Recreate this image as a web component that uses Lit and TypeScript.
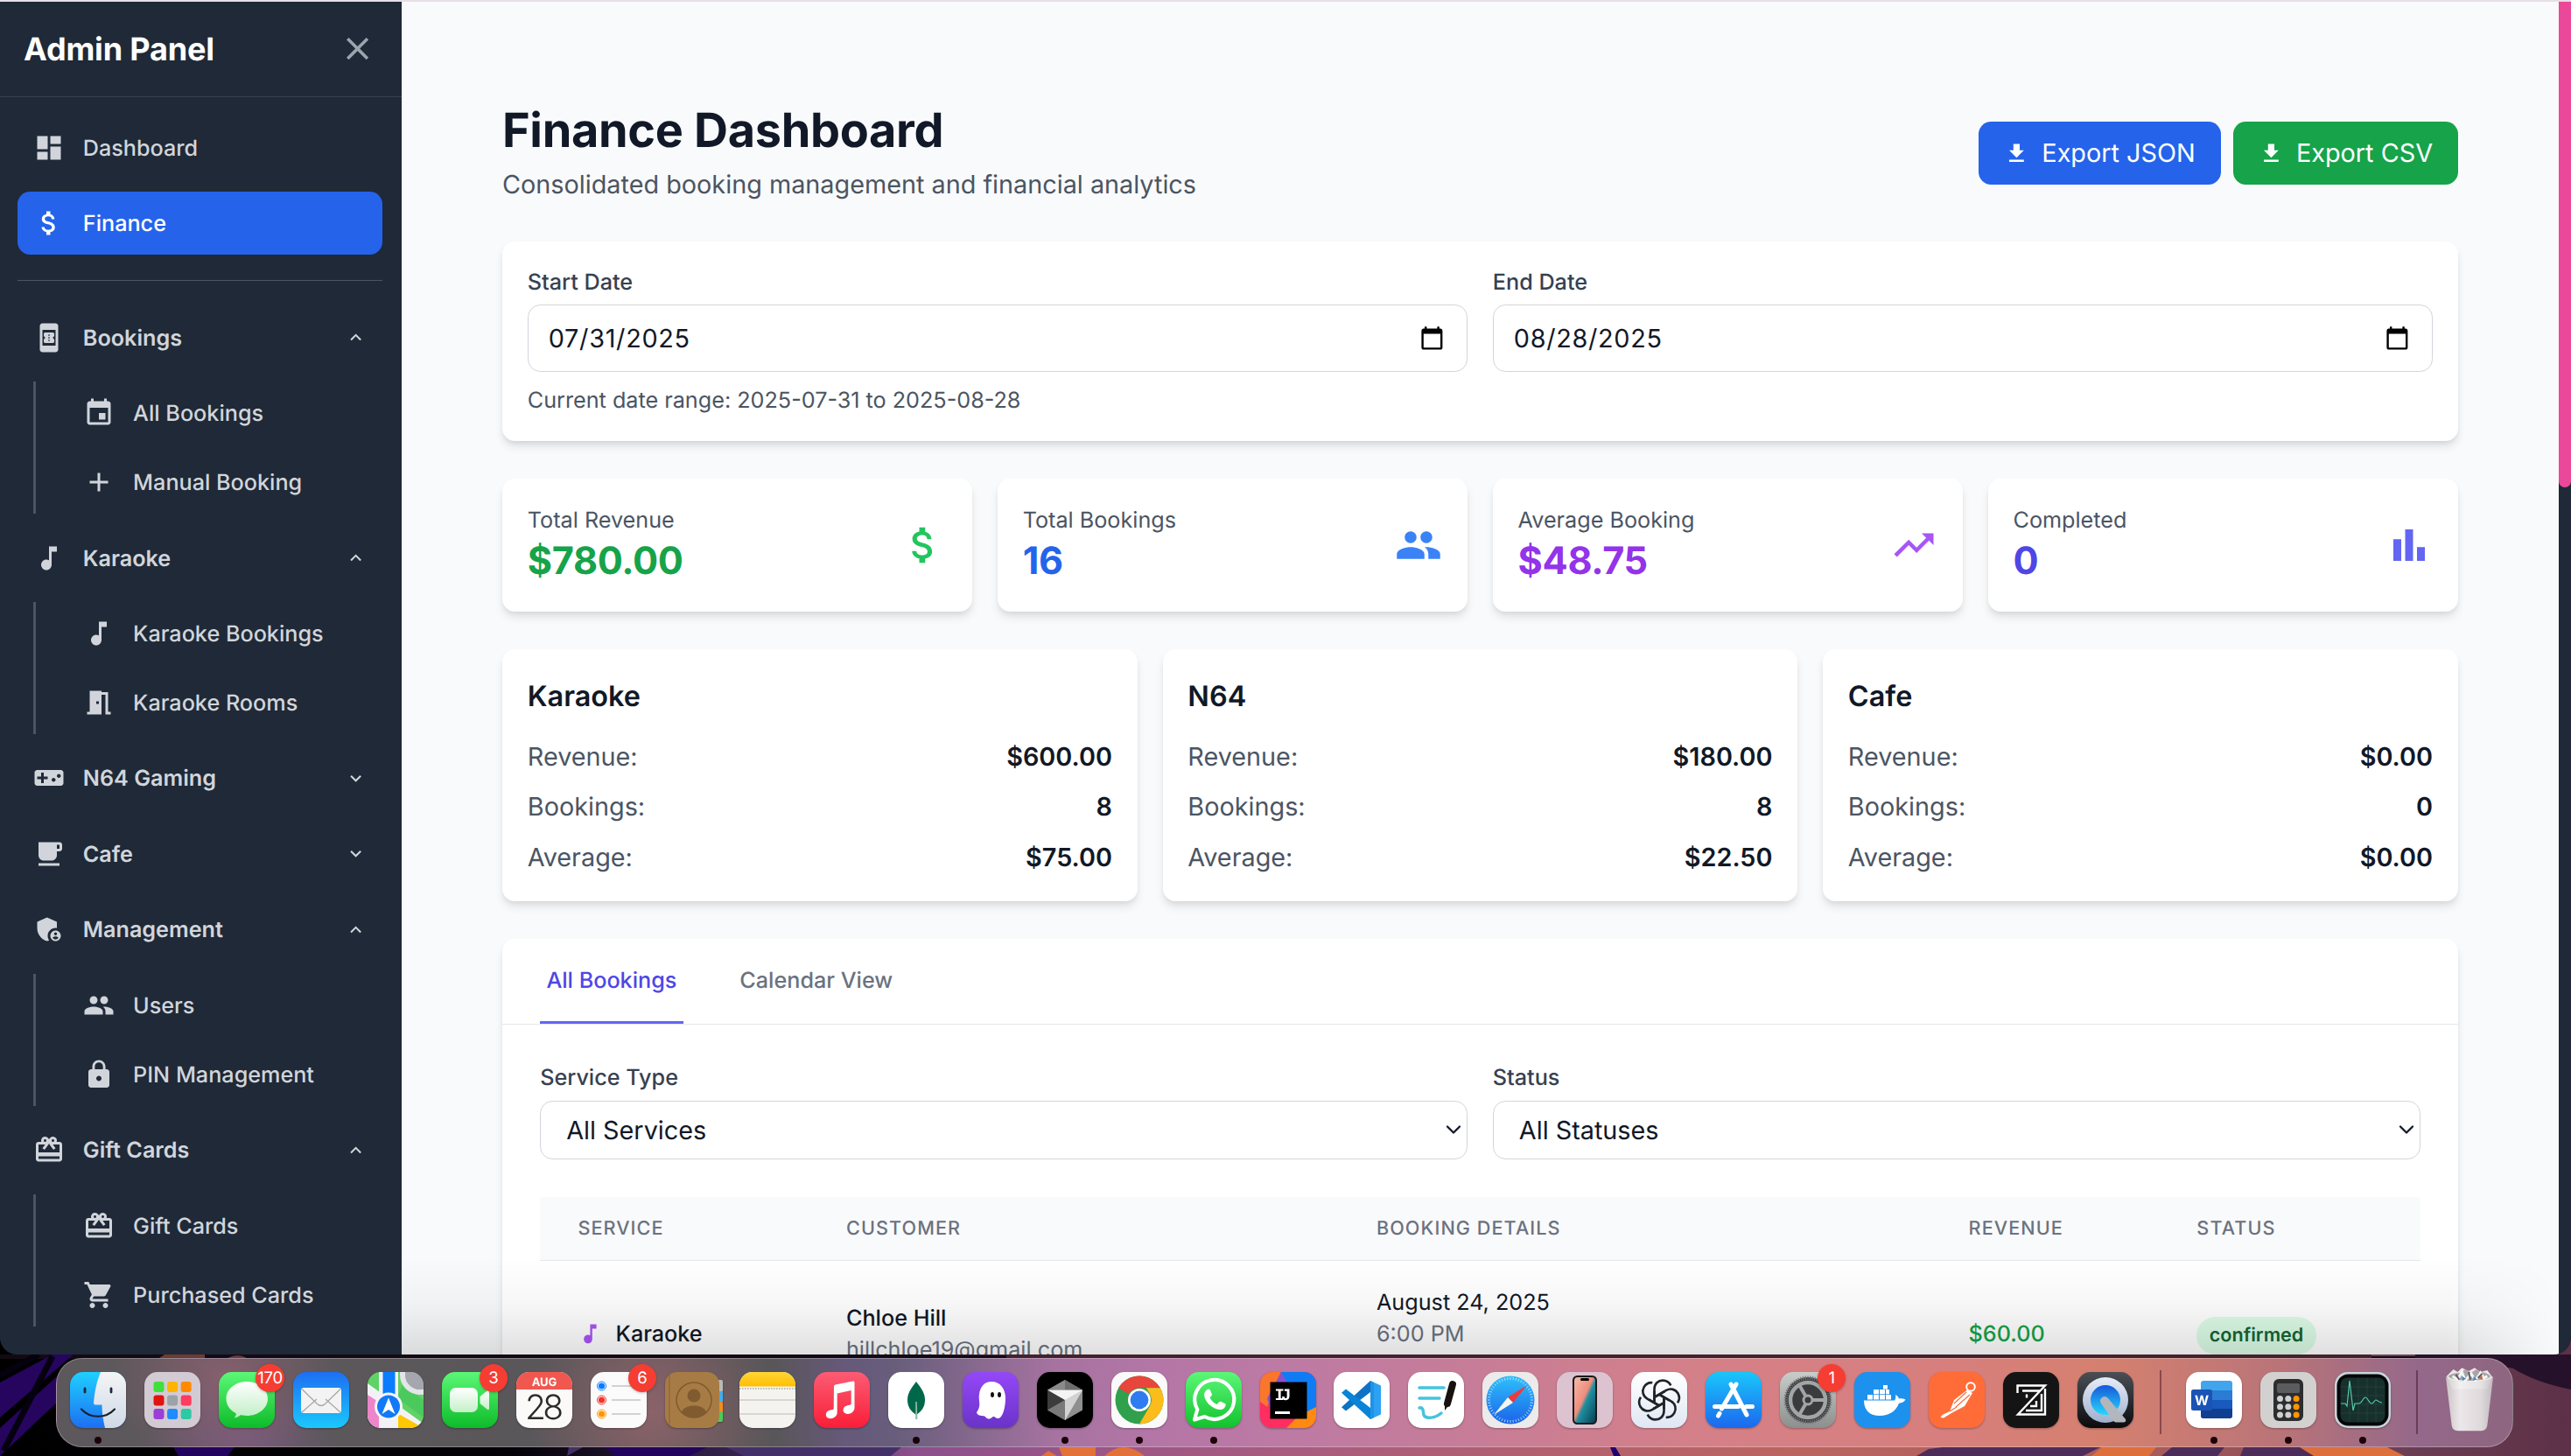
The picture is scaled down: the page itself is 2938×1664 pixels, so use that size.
import { LitElement, html, svg, css, nothing } from "lit";
import type { TemplateResult } from "lit";
import { customElement } from "lit/decorators.js";

/* ---------- 24-unit interface icons ---------- */
const PATHS: Record<string, string> = {
  dashboard: "M3 13h8V3H3v10zm0 8h8v-6H3v6zm10 0h8V11h-8v10zm0-18v6h8V3h-8z",
  money:
    "M11.8 10.9c-2.27-.59-3-1.2-3-2.15 0-1.09 1.01-1.85 2.7-1.85 1.78 0 2.44.85 2.5 2.1h2.21c-.07-1.72-1.12-3.3-3.21-3.81V3h-3v2.16c-1.94.42-3.5 1.68-3.5 3.61 0 2.31 1.91 3.46 4.7 4.13 2.5.6 3 1.48 3 2.41 0 .69-.49 1.79-2.7 1.79-2.06 0-2.87-.92-2.98-2.1h-2.2c.12 2.19 1.76 3.42 3.68 3.83V21h3v-2.15c1.95-.37 3.5-1.5 3.5-3.55 0-2.84-2.43-3.81-4.7-4.4z",
  book:
    "M17 1H7c-1.1 0-2 .9-2 2v18c0 1.1.9 2 2 2h10c1.1 0 2-.9 2-2V3c0-1.1-.9-2-2-2zM7 18V6h10v12H7zm9-7V9.14C16 8.51 15.55 8 15 8H9c-.55 0-.99.51-.99 1.14V11c.55 0 .99.45.99 1s-.45 1-1 1v1.86c0 .63.45 1.14 1 1.14h6c.55 0 1-.51 1-1.14V13c-.55 0-1-.45-1-1s.45-1 1-1zm-3.5 3.5h-1v-1h1v1zm0-2h-1v-1h1v1zm0-2h-1v-1h1v1z",
  event:
    "M17 12h-5v5h5v-5zM16 1v2H8V1H6v2H5c-1.11 0-1.99.9-1.99 2L3 19c0 1.1.89 2 2 2h14c1.1 0 2-.9 2-2V5c0-1.1-.9-2-2-2h-1V1h-2zm3 18H5V8h14v11z",
  add: "M19 13h-6v6h-2v-6H5v-2h6V5h2v6h6v2z",
  note: "M12 3v10.55c-.59-.34-1.27-.55-2-.55-2.21 0-4 1.79-4 4s1.79 4 4 4 4-1.79 4-4V7h4V3h-6z",
  room: "M14 6v15H3v-2h2V3h9v1h5v15h2v2h-4V6h-3zm-4 5v2h2v-2h-2z",
  game:
    "M21 6H3c-1.1 0-2 .9-2 2v8c0 1.1.9 2 2 2h18c1.1 0 2-.9 2-2V8c0-1.1-.9-2-2-2zm-10 7H8v3H6v-3H3v-2h3V8h2v3h3v2zm4.5 2c-.83 0-1.5-.67-1.5-1.5s.67-1.5 1.5-1.5 1.5.67 1.5 1.5-.67 1.5-1.5 1.5zm4-3c-.83 0-1.5-.67-1.5-1.5S18.67 9 19.5 9s1.5.67 1.5 1.5-.67 1.5-1.5 1.5z",
  cafe:
    "M20 3H4v10c0 2.21 1.79 4 4 4h6c2.21 0 4-1.79 4-4v-3h2c1.11 0 2-.9 2-2V5c0-1.11-.89-2-2-2zm0 5h-2V5h2v3zM4 19h16v2H4z",
  admin:
    "M17 11c.34 0 .67.04 1 .09V6.27L10.5 3 3 6.27v4.91c0 4.54 3.2 8.79 7.5 9.82.55-.13 1.08-.32 1.6-.55-.69-.98-1.1-2.17-1.1-3.45 0-3.31 2.69-6 6-6zM17 13c-2.21 0-4 1.79-4 4s1.79 4 4 4 4-1.79 4-4-1.79-4-4-4zm0 1.38c.62 0 1.12.51 1.12 1.12s-.51 1.12-1.12 1.12-1.12-.51-1.12-1.12.5-1.12 1.12-1.12zm0 5.37c-.93 0-1.74-.46-2.24-1.17.05-.72 1.51-1.08 2.24-1.08s2.19.36 2.24 1.08c-.5.71-1.31 1.17-2.24 1.17z",
  people:
    "M16 11c1.66 0 2.99-1.34 2.99-3S17.66 5 16 5c-1.66 0-3 1.34-3 3s1.34 3 3 3zm-8 0c1.66 0 2.99-1.34 2.99-3S9.66 5 8 5C6.34 5 5 6.34 5 8s1.34 3 3 3zm0 2c-2.33 0-7 1.17-7 3.5V19h14v-2.5c0-2.33-4.67-3.5-7-3.5zm8 0c-.29 0-.62.02-.97.05 1.16.84 1.97 1.97 1.97 3.45V19h6v-2.5c0-2.33-4.67-3.5-7-3.5z",
  lock:
    "M18 8h-1V6c0-2.76-2.24-5-5-5S7 3.24 7 6v2H6c-1.1 0-2 .9-2 2v10c0 1.1.9 2 2 2h12c1.1 0 2-.9 2-2V10c0-1.1-.9-2-2-2zm-6 9c-1.1 0-2-.9-2-2s.9-2 2-2 2 .9 2 2-.9 2-2 2zm3.1-9H8.9V6c0-1.71 1.39-3.1 3.1-3.1 1.71 0 3.1 1.39 3.1 3.1v2z",
  gift:
    "M20 6h-2.18c.11-.31.18-.65.18-1a2.996 2.996 0 0 0-5.5-1.65l-.5.67-.5-.68C10.96 2.54 10.05 2 9 2 7.34 2 6 3.34 6 5c0 .35.07.69.18 1H4c-1.11 0-1.99.89-1.99 2L2 19c0 1.11.89 2 2 2h16c1.11 0 2-.89 2-2V8c0-1.11-.89-2-2-2zm-5-2c.55 0 1 .45 1 1s-.45 1-1 1-1-.45-1-1 .45-1 1-1zM9 4c.55 0 1 .45 1 1s-.45 1-1 1-1-.45-1-1 .45-1 1-1zm11 15H4v-2h16v2zm0-5H4V8h5.08L7 10.83 8.62 12 11 8.76l1-1.36 1 1.36L15.38 12 17 10.83 14.92 8H20v6z",
  cart:
    "M7 18c-1.1 0-1.99.9-1.99 2S5.9 22 7 22s2-.9 2-2-.9-2-2-2zM1 2v2h2l3.6 7.59-1.35 2.45c-.16.28-.25.61-.25.96 0 1.1.9 2 2 2h12v-2H7.42c-.14 0-.25-.11-.25-.25l.03-.12.9-1.63h7.45c.75 0 1.41-.41 1.75-1.03l3.58-6.49A1.003 1.003 0 0 0 20 4H5.21l-.94-2H1zm16 16c-1.1 0-1.99.9-1.99 2s.89 2 1.99 2 2-.9 2-2-.9-2-2-2z",
  close: "M19 6.41L17.59 5 12 10.59 6.41 5 5 6.41 10.59 12 5 17.59 6.41 19 12 13.41 17.59 19 19 17.59 13.41 12z",
  less: "M12 8l-6 6 1.41 1.41L12 10.83l4.59 4.58L18 14z",
  more: "M16.59 8.59L12 13.17 7.41 8.59 6 10l6 6 6-6z",
  download: "M19 9h-4V3H9v6H5l7 7 7-7zM5 18v2h14v-2H5z",
  trend: "M16 6l2.29 2.29-4.88 4.88-4-4L2 16.59 3.41 18l6-6 4 4 6.3-6.29L22 12V6z",
  bars: "M4 9h4v11H4zM16 13h4v7h-4zM10 4h4v16h-4z",
};

const icon = (name: string, cls = "ic") =>
  html`<svg class=${cls} viewBox="0 0 24 24" fill="currentColor" aria-hidden="true"><path d=${PATHS[name]}></path></svg>`;

/* ---------- sidebar ---------- */
interface Section {
  icon: string;
  label: string;
  items?: { icon: string; label: string }[];
}

const SECTIONS: Section[] = [
  { icon: "book", label: "Bookings", items: [{ icon: "event", label: "All Bookings" }, { icon: "add", label: "Manual Booking" }] },
  { icon: "note", label: "Karaoke", items: [{ icon: "note", label: "Karaoke Bookings" }, { icon: "room", label: "Karaoke Rooms" }] },
  { icon: "game", label: "N64 Gaming" },
  { icon: "cafe", label: "Cafe" },
  { icon: "admin", label: "Management", items: [{ icon: "people", label: "Users" }, { icon: "lock", label: "PIN Management" }] },
  { icon: "gift", label: "Gift Cards", items: [{ icon: "gift", label: "Gift Cards" }, { icon: "cart", label: "Purchased Cards" }] },
];

@customElement("side-nav")
export class SideNav extends LitElement {
  static styles = css`
    :host {
      display: block;
      width: 459px;
      flex: none;
      background: #1f2937;
      color: #d1d5db;
      font-size: 25.2px;
      line-height: 36px;
    }
    .head {
      display: flex;
      justify-content: space-between;
      align-items: center;
      height: 108px;
      padding: 0 28.8px 0 27px;
      border-bottom: 1px solid #374151;
    }
    .title {
      font-size: 36px;
      line-height: 50.4px;
      font-weight: 700;
      letter-spacing: -0.17px;
      color: #fff;
    }
    .close {
      width: 43.2px;
      height: 43.2px;
      color: #9ca3af;
    }
    nav {
      display: flex;
      flex-direction: column;
      gap: 14.4px;
      padding: 21.6px 22px 0 19.8px;
    }
    .row {
      display: flex;
      align-items: center;
      gap: 21px;
      height: 72px;
      padding: 0 18px;
      border-radius: 14.4px;
      font-weight: 450;
    }
    .row.active {
      background: #2563eb;
      color: #fff;
    }
    .row.group {
      font-weight: 600;
    }
    .label {
      flex: 1;
      padding-top: 2px;
    }
    .ic {
      width: 36px;
      height: 36px;
      flex: none;
    }
    .chev {
      width: 25.2px;
      height: 25.2px;
      flex: none;
    }
    hr {
      width: 100%;
      height: 1px;
      margin: 14.4px 0;
      border: 0;
      background: #4b5563;
    }
    .sub {
      display: flex;
      flex-direction: column;
      gap: 7.2px;
      margin-left: 18px;
      padding-left: 36.3px;
      border-left: 3px solid #4b5563;
    }
  `;
  render() {
    return html`
      <div class="head"><span class="title">Admin Panel</span>${icon("close", "close")}</div>
      <nav>
        <div class="row">${icon("dashboard")}<span class="label">Dashboard</span></div>
        <div class="row active">${icon("money")}<span class="label">Finance</span></div>
        <hr />
        ${SECTIONS.map(
          (s) => html`
            <div class="row group">
              ${icon(s.icon)}<span class="label">${s.label}</span>${icon(s.items ? "less" : "more", "chev")}
            </div>
            ${s.items
              ? html`<div class="sub">
                  ${s.items.map((i) => html`<div class="row">${icon(i.icon)}<span class="label">${i.label}</span></div>`)}
                </div>`
              : nothing}
          `
        )}
      </nav>
    `;
  }
}

/* ---------- finance page ---------- */
const STATS = [
  { label: "Total Revenue", value: "$780.00", tone: "green", icon: "money" },
  { label: "Total Bookings", value: "16", tone: "blue", icon: "people" },
  { label: "Average Booking", value: "$48.75", tone: "purple", icon: "trend" },
  { label: "Completed", value: "0", tone: "indigo", icon: "bars" },
];
const SERVICES = [
  { name: "Karaoke", revenue: "$600.00", bookings: "8", average: "$75.00" },
  { name: "N64", revenue: "$180.00", bookings: "8", average: "$22.50" },
  { name: "Cafe", revenue: "$0.00", bookings: "0", average: "$0.00" },
];

@customElement("finance-page")
export class FinancePage extends LitElement {
  static styles = css`
    :host {
      display: block;
      flex: 1;
      min-width: 0;
      background: #f9fafb;
      color: #111827;
      font-size: 28.8px;
      line-height: 43.2px;
    }
    .page {
      display: flex;
      flex-direction: column;
      gap: 43.2px;
      padding: 115.2px 115.2px 0 115px;
    }
    .card {
      background: #fff;
      border-radius: 14.4px;
      box-shadow: 0 7.2px 10.8px -1.8px rgba(0, 0, 0, 0.1), 0 3.6px 7.2px -3.6px rgba(0, 0, 0, 0.1);
    }
    header {
      display: flex;
      justify-content: space-between;
      align-items: center;
      height: 115.6px;
    }
    h1 {
      margin: 0 0 6.4px;
      font-size: 54px;
      line-height: 64.8px;
      font-weight: 700;
      letter-spacing: -0.32px;
    }
    .lede {
      margin: 0;
      color: #4b5563;
    }
    .actions {
      display: flex;
      gap: 14.4px;
    }
    .btn {
      display: flex;
      align-items: center;
      gap: 14.4px;
      height: 72px;
      padding: 0 28.8px;
      border-radius: 14.4px;
      color: #fff;
      background: #2563eb;
    }
    .btn.csv {
      background: #16a34a;
    }
    .btn .ic {
      width: 28.8px;
      height: 28.8px;
    }
    .small {
      font-size: 25.2px;
      line-height: 36px;
    }
    .lbl {
      font-size: 25.2px;
      line-height: 36px;
      font-weight: 500;
      color: #374151;
      margin-bottom: 7.2px;
    }
    .filters {
      padding: 28.8px;
      height: 170.6px;
    }
    .two {
      display: grid;
      grid-template-columns: 1fr 1fr;
      gap: 28.8px;
    }
    .date {
      display: flex;
      align-items: center;
      justify-content: space-between;
      box-sizing: border-box;
      height: 76.8px;
      padding: 0 25px 0 23px;
      border: 1px solid #d1d5db;
      border-radius: 14.4px;
      letter-spacing: 0.7px;
    }
    .cal {
      width: 28.8px;
      height: 28.8px;
      color: #000;
    }
    .range {
      margin-top: 15.4px;
      color: #4b5563;
    }
    .stats {
      display: grid;
      grid-template-columns: repeat(4, 1fr);
      gap: 28.8px;
    }
    .stat {
      display: flex;
      justify-content: space-between;
      align-items: center;
      height: 93.6px;
      padding: 28.8px;
    }
    .stat .small {
      padding-top: 2px;
      color: #4b5563;
    }
    .value {
      font-size: 43.2px;
      line-height: 57.6px;
      font-weight: 700;
      letter-spacing: -0.35px;
    }
    .stat .ic {
      width: 54px;
      height: 54px;
    }
    .green .value { color: #16a34a; }
    .green .ic { color: #22c55e; }
    .blue .value { color: #2563eb; }
    .blue .ic { color: #3b82f6; }
    .purple .value { color: #9333ea; }
    .purple .ic { color: #a855f7; }
    .indigo .value { color: #4f46e5; }
    .indigo .ic { color: #6366f1; }
    .services {
      display: grid;
      grid-template-columns: repeat(3, 1fr);
      gap: 28.8px;
    }
    .service {
      display: flex;
      flex-direction: column;
      gap: 14.4px;
      padding: 28.8px;
    }
    h3 {
      margin: 0 0 7.2px;
      font-size: 32.4px;
      line-height: 50.4px;
      font-weight: 600;
    }
    .line {
      display: flex;
      justify-content: space-between;
    }
    .line span {
      color: #4b5563;
    }
    .line b {
      font-weight: 600;
    }
    .tabs {
      display: flex;
      gap: 57.6px;
      padding: 0 43.2px;
      border-bottom: 1px solid #e5e7eb;
      font-size: 25.2px;
      line-height: 36px;
      font-weight: 500;
      color: #6b7280;
    }
    .tab {
      padding: 29.8px 7.2px 28.6px;
      border-bottom: 3px solid transparent;
    }
    .tab.on {
      color: #4f46e5;
      border-color: #6366f1;
    }
    .body {
      padding: 43.2px;
    }
    .select {
      display: flex;
      align-items: center;
      justify-content: space-between;
      box-sizing: border-box;
      height: 67.6px;
      padding: 0 6px 0 29px;
      border: 1px solid #d1d5db;
      border-radius: 14.4px;
      margin-bottom: 43.2px;
    }
    .caret {
      width: 18px;
      height: 12px;
    }
    .tr {
      display: grid;
      grid-template-columns: 306.6px 606px 676.6px 260.8px 1fr;
    }
    .tr > div {
      padding: 0 43.2px;
      white-space: nowrap;
    }
    .th {
      height: 72px;
      align-items: center;
      background: #f9fafb;
      border-bottom: 1px solid #e5e7eb;
      font-size: 21.6px;
      line-height: 29.8px;
      font-weight: 500;
      letter-spacing: 1.08px;
      color: #6b7280;
    }
    .td {
      height: 166.6px;
      align-items: center;
      font-size: 25.2px;
      line-height: 36px;
    }
    .svc {
      display: flex;
      align-items: center;
      gap: 14.4px;
      font-weight: 500;
    }
    .svc .ic {
      width: 28.8px;
      height: 28.8px;
      color: #a855f7;
    }
    .when {
      height: 108px;
    }
    .med { font-weight: 500; }
    .dim { color: #6b7280; }
    .rev { color: #16a34a; font-weight: 500; }
    .pill {
      display: block;
      width: max-content;
      margin-top: 3px;
      padding: 7.2px 14.4px;
      border-radius: 22px;
      background: #dcfce7;
      color: #166534;
      font-size: 21.6px;
      line-height: 28.8px;
      font-weight: 600;
    }
  `;

  private date(label: string, value: string) {
    return html`<div>
      <div class="lbl">${label}</div>
      <div class="date">
        <span>${value}</span>
        <svg class="cal" viewBox="0 0 24 24" aria-hidden="true">
          <path fill="currentColor" d="M20 3h-1V1h-2v2H7V1H5v2H4c-1.1 0-2 .9-2 2v16c0 1.1.9 2 2 2h16c1.1 0 2-.9 2-2V5c0-1.1-.9-2-2-2zm0 18H4V8h16v13z"></path>
        </svg>
      </div>
    </div>`;
  }

  private select(label: string, value: string) {
    return html`<div>
      <div class="lbl">${label}</div>
      <div class="select">
        <span>${value}</span>
        <svg class="caret" viewBox="0 0 18 12" aria-hidden="true">
          <path d="M2 2.500l7 7 7-7" fill="none" stroke="#111827" stroke-width="2.300" stroke-linecap="round" stroke-linejoin="round"></path>
        </svg>
      </div>
    </div>`;
  }

  render() {
    return html`<div class="page">
      <header>
        <div>
          <h1>Finance Dashboard</h1>
          <p class="lede">Consolidated booking management and financial analytics</p>
        </div>
        <div class="actions">
          <div class="btn">${icon("download")}<span>Export JSON</span></div>
          <div class="btn csv">${icon("download")}<span>Export CSV</span></div>
        </div>
      </header>

      <section class="card filters">
        <div class="two">${this.date("Start Date", "07/31/2025")}${this.date("End Date", "08/28/2025")}</div>
        <div class="small range">Current date range: 2025-07-31 to 2025-08-28</div>
      </section>

      <section class="stats">
        ${STATS.map(
          (s) => html`<div class="card stat ${s.tone}">
            <div>
              <div class="small">${s.label}</div>
              <div class="value">${s.value}</div>
            </div>
            ${icon(s.icon)}
          </div>`
        )}
      </section>

      <section class="services">
        ${SERVICES.map(
          (s) => html`<div class="card service">
            <h3>${s.name}</h3>
            <div class="line"><span>Revenue:</span><b>${s.revenue}</b></div>
            <div class="line"><span>Bookings:</span><b>${s.bookings}</b></div>
            <div class="line"><span>Average:</span><b>${s.average}</b></div>
          </div>`
        )}
      </section>

      <section class="card">
        <div class="tabs">
          <div class="tab on">All Bookings</div>
          <div class="tab">Calendar View</div>
        </div>
        <div class="body">
          <div class="two">${this.select("Service Type", "All Services")}${this.select("Status", "All Statuses")}</div>
          <div class="tr th">
            <div>SERVICE</div>
            <div>CUSTOMER</div>
            <div>BOOKING DETAILS</div>
            <div>REVENUE</div>
            <div>STATUS</div>
          </div>
          <div class="tr td">
            <div class="svc">${icon("note")}<span>Karaoke</span></div>
            <div>
              <div class="med">Chloe Hill</div>
              <div class="dim">hillchloe19@gmail.com</div>
            </div>
            <div class="when">
              <div>August 24, 2025</div>
              <div class="dim">6:00 PM</div>
            </div>
            <div class="rev">$60.00</div>
            <div><span class="pill">confirmed</span></div>
          </div>
        </div>
      </section>
    </div>`;
  }
}

/* ---------- dock ---------- */
const plate = (fill: string) => svg`<rect width="64" height="64" rx="15" fill=${fill}></rect>`;
const grad = (id: string, a: string, b: string) => svg`
  <linearGradient id=${id} x1="0" y1="0" x2="0" y2="1">
    <stop offset="0" stop-color=${a}></stop><stop offset="1" stop-color=${b}></stop>
  </linearGradient>`;

const launchColors = ["#3fe03c", "#ffb400", "#ff8a00", "#e0140f", "#9aa3a8", "#ff3b5f", "#9a3fd8", "#1f8bff", "#2cc9a4"];
const ticks = (n: number, r1: number, r2: number, color: string, w: number) =>
  Array.from({ length: n }, (_, i) => {
    const a = (i / n) * Math.PI * 2;
    return svg`<line x1=${32 + r1 * Math.cos(a)} y1=${32 + r1 * Math.sin(a)} x2=${32 + r2 * Math.cos(a)} y2=${32 + r2 * Math.sin(a)} stroke=${color} stroke-width=${w}></line>`;
  });

interface DockApp {
  name: string;
  art: unknown;
  badge?: string;
  open?: boolean;
}

const APPS: DockApp[] = [
  {
    name: "Finder",
    open: true,
    art: svg`<defs>${grad("fi", "#1fd0ff", "#1d6ff2")}${grad("fj", "#f4f4f6", "#cfd9e6")}<clipPath id="fc"><rect width="64" height="64" rx="15"></rect></clipPath></defs>
      <g clip-path="url(#fc)"><rect width="64" height="64" fill="url(#fi)"></rect>
      <path d="M35 0C30 12 28 24 27 35.500q0 2 2 2h7.500C36.500 47 38 56 40 64H64V0z" fill="url(#fj)"></path></g>
      <path d="M17 19v4M47 19v4" stroke="#1b2b3c" stroke-width="2.800" stroke-linecap="round"></path>
      <path d="M13 42.500c10 11 28 11 38 0" stroke="#16222e" stroke-width="2.200" fill="none" stroke-linecap="round"></path>`,
  },
  {
    name: "Launchpad",
    art: svg`<rect width="64" height="64" rx="15" fill="#d3cbd3"></rect>
      ${launchColors.map((c, i) => svg`<rect x=${10.5 + (i % 3) * 15.6} y=${11 + Math.floor(i / 3) * 15.5} width="12" height="12" rx="3" fill=${c}></rect>`)}`,
  },
  {
    name: "Messages",
    badge: "170",
    art: svg`<defs>${grad("ms", "#5cf777", "#0dbc29")}${grad("mt", "#ffffff", "#bfeec4")}</defs>${plate("url(#ms)")}
      <path d="M32 11c13 0 24 8.500 24 19.500S45 50 32 50c-2.500 0-5-.3-7-.9-2 1.800-4.500 3-7.500 3.400 1.600-1.500 2.400-3.200 2.300-5.300C12.500 43.600 8.500 37.500 8.500 30.500 8.500 19.500 19 11 32 11z" fill="url(#mt)"></path>`,
  },
  {
    name: "Mail",
    art: svg`<defs>${grad("ml", "#1d6ff2", "#1ac8fc")}</defs>${plate("url(#ml)")}
      <rect x="9" y="18" width="46" height="29" rx="3" fill="#f3f3f3"></rect>
      <path d="M10 46l17-15M54 46L37 31M10 19.500l17.500 17q4.500 4 9 0L54 19.500" fill="none" stroke="#a8a8a8" stroke-width="1.300"></path>`,
  },
  {
    name: "Maps",
    art: svg`<defs><clipPath id="mp"><rect width="64" height="64" rx="15"></rect></clipPath></defs>
      <g clip-path="url(#mp)"><rect width="64" height="64" fill="#5fd365"></rect>
      <path d="M0 13l64 46v5H0z" fill="#f2f2f6"></path>
      <path d="M0 26l14 9v29H0z" fill="#ec85c9"></path>
      <path d="M34 64V47l30 17z" fill="#ffc800"></path>
      <path d="M34 30l30 22V32L40 14z" fill="#4cc95c"></path>
      <rect x="13" y="0" width="22" height="64" fill="#f2f2f6"></rect>
      <rect x="17.500" y="0" width="14" height="40" fill="#0a7cff"></rect>
      <circle cx="60" cy="3" r="20" fill="none" stroke="#e4e4ea" stroke-width="6"></circle>
      <circle cx="60" cy="3" r="17" fill="#a6a6b0"></circle></g>
      <circle cx="24" cy="39.500" r="16" fill="#f4f4f8"></circle><circle cx="24" cy="39.500" r="13" fill="#1279f7"></circle>
      <path d="M24 29.500l7.500 18.500L24 43l-7.500 5z" fill="#fff"></path>`,
  },
  {
    name: "FaceTime",
    badge: "3",
    art: svg`<defs>${grad("ft", "#5cf777", "#0dbc29")}${grad("fu", "#ffffff", "#c4f0c8")}</defs>${plate("url(#ft)")}
      <rect x="9" y="18" width="32" height="28" rx="7" fill="url(#fu)"></rect>
      <path d="M43.500 28l8-6.500q2.500-1.500 2.500 1v19q0 2.500-2.500 1l-8-6.500z" fill="url(#fu)"></path>`,
  },
  {
    name: "Calendar",
    art: svg`<defs><clipPath id="cl"><rect width="64" height="64" rx="15"></rect></clipPath></defs>
      <g clip-path="url(#cl)"><rect width="64" height="64" fill="#fbfaf9"></rect><rect width="64" height="20" fill="#f0584f"></rect></g>
      <text x="32" y="15.500" text-anchor="middle" font-size="13" font-weight="700" fill="#fff">AUG</text>
      <text x="32" y="54" text-anchor="middle" font-size="39" font-weight="300" fill="#2b2b2b" textLength="44">28</text>`,
  },
  {
    name: "Reminders",
    badge: "6",
    art: svg`${plate("#fbfbfb")}
      ${["#0a7cff", "#f0352b", "#ff9500"].map(
        (c, i) => svg`<circle cx="12.500" cy=${16 + i * 16} r="5" fill="#fff" stroke=${c} stroke-width="1"></circle><circle cx="12.500" cy=${16 + i * 16} r="3.600" fill=${c}></circle>
        <path d="M24 ${16 + i * 16}h33" stroke="#c4c4c6" stroke-width="1.500"></path>`
      )}`,
  },
  {
    name: "Contacts",
    art: svg`<rect x="52" y="9" width="14" height="14" rx="2" fill="#b9b9b9"></rect><rect x="52" y="22" width="14" height="13" rx="2" fill="#41aef0"></rect>
      <rect x="52" y="34" width="14" height="13" rx="2" fill="#f58a1f"></rect><rect x="52" y="45" width="14" height="12" rx="2" fill="#4ccb5a"></rect>
      <rect width="62" height="64" rx="14" fill="#a77b44"></rect><path d="M5 3v58" stroke="#8a6233" stroke-width="1"></path>
      <circle cx="33" cy="32" r="20" fill="none" stroke="#7f5b2f" stroke-width="1.500"></circle>
      <circle cx="33" cy="27" r="7.500" fill="#7f5b2f"></circle><path d="M19 46c2-10 26-10 28 0-8 8-20 8-28 0z" fill="#7f5b2f"></path>`,
  },
  {
    name: "Notes",
    art: svg`<defs>${grad("nt", "#ffd638", "#ffbe00")}<clipPath id="nc"><rect width="64" height="64" rx="15"></rect></clipPath></defs>
      <g clip-path="url(#nc)"><rect width="64" height="64" fill="#f4f3ef"></rect><rect width="64" height="16.500" fill="url(#nt)"></rect>
      <path d="M0 19h64" stroke="#a9a9a6" stroke-width="1.500" stroke-dasharray="1.500 1.500"></path><path d="M0 32h64M0 48h64" stroke="#cfcdc8" stroke-width="1.500"></path></g>`,
  },
  {
    name: "Music",
    art: svg`<defs>${grad("mu", "#fc5c74", "#fa1e37")}</defs>${plate("url(#mu)")}
      <path d="M23 16.500q0-1.500 1.500-1.900l20-4.200q2-.4 2 1.600v28.500c0 4-2.600 6.500-6.400 7.300-4 .8-6.600-1.300-6.600-4.200 0-2.800 1.800-4.600 5-5.300l3-.7q1.200-.3 1.200-1.600V21l-16 3.500v21.500c0 4-2.800 6.300-6.300 7-4 .8-6.600-1.200-6.600-4.200 0-2.800 1.900-4.500 5-5.200l2.700-.6q1.200-.3 1.200-1.500z" fill="#fff"></path>`,
  },
  {
    name: "MongoDB Compass",
    open: true,
    art: svg`${plate("#ffffff")}<path d="M32 11c7 9 10 14 10 21 0 8-4 13-9.200 16.500h-1.600C26 45 22 40 22 32c0-7 3-12 10-21z" fill="#00684a"></path>
      <path d="M31.200 34h1.600l.6 20h-2.200z" fill="#8fb8a9"></path>`,
  },
  {
    name: "Ghostty",
    art: svg`<defs>${grad("gh", "#9448f7", "#6a33c9")}</defs>${plate("url(#gh)")}
      <path d="M33 11c10 0 16 8 16 19 0 10-3 22-8 23-3 .6-3.500-2-5.500-2s-2.500 2.500-5.500 2.500-3.500-2.500-5-3c-3-.5-7-.5-8.500-3-1-2 1-3 2-6 2-6-.5-9 .5-16C20 17 25 11 33 11z" fill="#fff"></path>
      <ellipse cx="34" cy="26" rx="2" ry="3" fill="#111"></ellipse><ellipse cx="42" cy="26" rx="2" ry="3" fill="#111"></ellipse>`,
  },
  {
    name: "Cursor",
    open: true,
    art: svg`${plate("#000000")}<path d="M32 9l20 11.500v23L32 55 12 43.500v-23z" fill="#555"></path>
      <path d="M32 9l20 11.500H32z" fill="#6e6e6e"></path><path d="M32 9v11.500H12z" fill="#8a8a8a"></path>
      <path d="M12 20.500v23L32 32z" fill="#3c3c3c"></path><path d="M12 43.500L32 55V32z" fill="#7a7a7a"></path>
      <path d="M52 20.500v23L32 55z" fill="#8f8f8f"></path><path d="M12 20.500h40L32 55V32z" fill="#f4f4f4"></path><path d="M52 20.500L32 55V32z" fill="#d2d2d2"></path>`,
  },
  {
    name: "Chrome",
    open: true,
    art: svg`${plate("#fbfafa")}<circle cx="32" cy="32" r="27.500" fill="#30a04d"></circle>
      <path d="M32 4.500A27.500 27.500 0 0 1 55.800 18.300H32a13.700 13.700 0 0 0-11.900 6.800L8.200 18.200A27.500 27.500 0 0 1 32 4.500z" fill="#e8453c"></path>
      <path d="M55.800 18.300A27.500 27.500 0 0 1 32 59.500l11.900-20.600A13.700 13.700 0 0 0 43.900 25l-3.900-6.700z" fill="#fbbc1c"></path>
      <circle cx="32" cy="32" r="13" fill="#fff"></circle><circle cx="32" cy="32" r="10.400" fill="#2f7cf0"></circle>`,
  },
  {
    name: "WhatsApp",
    open: true,
    art: svg`<defs>${grad("wa", "#5cf777", "#12c22d")}</defs>${plate("url(#wa)")}
      <path d="M10 54.500l3.300-11.800A22.500 22.500 0 1 1 21.700 51z" fill="none" stroke="#fff" stroke-width="4.200" stroke-linejoin="round"></path>
      <path d="M24.500 20c1-.9 2.700-.8 3.300.5l2 4.600c.3.800.1 1.500-.4 2.100l-1.800 2.200c2 3.600 4.500 5.900 8.200 7.600l2.300-2.700c.5-.6 1.200-.8 2-.5l4.600 2.200c.9.400 1.100 1 .9 2-.6 3.200-3.400 5.200-6.300 5.100-9.400-.7-18-9.300-18.200-17-.1-2.400 1.400-4.500 3.400-6.100z" fill="#fff"></path>`,
  },
  {
    name: "IntelliJ IDEA",
    art: svg`<defs><clipPath id="ij"><rect width="64" height="64" rx="14"></rect></clipPath></defs>
      <g clip-path="url(#ij)"><rect width="64" height="64" fill="#ff2d60"></rect><path d="M0 0h24L8 40 0 34z" fill="#f9762c"></path>
      <path d="M24 0h40v44L44 52 14 24z" fill="#0f7cf5"></path><path d="M24 0l14 24L14 50 8 30z" fill="#8a52c8"></path><path d="M64 40v24H30l14-14z" fill="#ff8a12"></path></g>
      <rect x="11.500" y="11.500" width="42" height="42" fill="#000"></rect><rect x="17" y="45" width="17" height="3" fill="#fff"></rect>
      <text x="16.500" y="31.500" font-family="Liberation Mono, monospace" font-size="19" font-weight="700" fill="#fff" textLength="19">IJ</text>`,
  },
  {
    name: "Visual Studio Code",
    art: svg`${plate("#ffffff")}<path d="M42 10l12 5.500v33L42 54z" fill="#2ea2f2"></path>
      <path d="M42 10v13L14 44.500l-5-4.300z" fill="#0f72c2"></path><path d="M42 54V41L14 19.500l-5 4.300z" fill="#0a84d6"></path><path d="M42 10v44l4-2V12z" fill="#1f93e6"></path>`,
  },
  {
    name: "Notes writer",
    art: svg`${plate("#ffffff")}<path d="M13 18h28M13 30h23" stroke="#45c3e0" stroke-width="3.500" stroke-linecap="round"></path>
      <path d="M13 41c5-1 4 4 5 8 2 5 13 4 20-2" stroke="#45c3e0" stroke-width="3.500" fill="none" stroke-linecap="round"></path>
      <path d="M51 14l-6 22" stroke="#17120f" stroke-width="8" stroke-linecap="round"></path><path d="M42 34l6 2-6 8z" fill="#17120f"></path>`,
  },
  {
    name: "Safari",
    art: svg`<defs>${grad("sf", "#2fc0fb", "#1a63e8")}</defs>${plate("#eceaea")}<circle cx="32" cy="32" r="27.500" fill="url(#sf)"></circle>
      ${ticks(48, 23, 26, "#d5ecff", 0.8)}
      <path d="M51 15L35 35l-6-6z" fill="#f03a35"></path><path d="M13 49l16-20 6 6z" fill="#f4f4f4"></path>`,
  },
  {
    name: "iPhone Mirroring",
    art: svg`<defs><linearGradient id="ip" x1="0" y1="0" x2="1" y2="1"><stop offset="0" stop-color="#f7b9a8"></stop><stop offset=".45" stop-color="#ee8d7c"></stop><stop offset=".55" stop-color="#1d8f9f"></stop><stop offset="1" stop-color="#093f54"></stop></linearGradient></defs>
      <rect width="64" height="64" rx="15" fill="#dcc3cf"></rect>
      <rect x="18" y="4" width="28" height="56" rx="5.500" fill="#1b1a1c"></rect><rect x="20" y="6" width="24" height="52" rx="4" fill="url(#ip)"></rect><rect x="27" y="7" width="10" height="3" rx="1.500" fill="#000"></rect>`,
  },
  {
    name: "ChatGPT",
    art: svg`<defs>${grad("gp", "#ffffff", "#dfe7f4")}</defs>${plate("url(#gp)")}
      <g fill="none" stroke="#1f2328" stroke-width="2.600" stroke-linejoin="round">
      ${[0, 60, 120, 180, 240, 300].map((a) => svg`<path transform="rotate(${a} 32 32)" d="M26.500 35.200V19.500C26.500 13.500 31 9.600 36 9.600c4 0 7.500 2 9.300 5.800M26.500 28.800L38.500 22"></path>`)}
      </g>`,
  },
  {
    name: "App Store",
    art: svg`<defs>${grad("as", "#1ac6fb", "#1c68ee")}</defs>${plate("url(#as)")}
      <g stroke="#fff" stroke-width="5" stroke-linecap="round"><path d="M35 14L18.500 42M29 14l18 35M10.500 39.500h27M46.500 39.500h7M16 47.500l-1.500 2.500"></path></g>`,
  },
  {
    name: "System Settings",
    badge: "1",
    art: svg`<defs>${grad("ss", "#c9cdca", "#8b8f8d")}</defs>${plate("url(#ss)")}<circle cx="32" cy="32" r="26" fill="#3a3b3d"></circle>
      ${ticks(60, 23, 27.5, "#6f7173", 1.3)}<circle cx="32" cy="32" r="20" fill="none" stroke="#a2a5a6" stroke-width="4.500"></circle>
      <circle cx="32" cy="32" r="5" fill="none" stroke="#a2a5a6" stroke-width="3"></circle>
      <path d="M37 32h15M29.500 27.700L22 14.700M29.500 36.300L22 49.300" stroke="#a2a5a6" stroke-width="4"></path>`,
  },
  {
    name: "Docker",
    art: svg`${plate("#1d91ee")}<path d="M11 32.500h35c1.500-2 1.500-4.500 1-6.500 2 1 3.500 2.500 4 4.500 2.500-.6 5-.2 7.500 1-1.500 2.700-4 4-7.500 4.200C47.500 44.500 40 50 29 50c-10.500 0-18-5.500-18-17.500z" fill="#fff"></path>
      <g fill="#fff"><path d="M15 26h6v5.500h-6zM22 26h6v5.500h-6zM29 26h6v5.500h-6zM36 26h6v5.500h-6zM22 20h6v5.300h-6zM29 20h6v5.300h-6zM33 15h5v4.500h-5zM36 20h4v5.300h-4z"></path></g>`,
  },
  {
    name: "Postman",
    art: svg`${plate("#ff6c37")}<circle cx="48" cy="17" r="4.800" fill="none" stroke="#fff" stroke-width="2"></circle>
      <path d="M44 20.500l6 3.500-9 15-15 8-9 5.500-3.500-.5 2-3 8.500-4 5-13z" fill="#fff"></path>
      <path d="M29 36l14-13M31 40l16-14M24 45l8-5" stroke="#ff6c37" stroke-width="1.200"></path>`,
  },
  {
    name: "Zed",
    art: svg`${plate("#141414")}<g fill="none" stroke="#fff" stroke-width="2.400"><path d="M16.500 24V15.500H48L17 48.500h31V19M22 21.500h20M44 25v19H26M27 29.500v-4M38 33v6h-7"></path></g>`,
  },
  {
    name: "QuickTime Player",
    art: svg`<defs>${grad("qt", "#4b4f55", "#0b0b0d")}${grad("qr", "#e6ecf8", "#9fb0cc")}${grad("qb", "#1658d8", "#25d8ff")}</defs>${plate("url(#qt)")}
      <circle cx="32" cy="32" r="26" fill="url(#qr)"></circle><circle cx="32" cy="32" r="17" fill="url(#qb)"></circle>
      <path d="M27 30q4-4 8 0l20 24q1 3-2 3.500h-9q-2 0-3-2L27 36q-2-3 0-6z" fill="#b3b6bd"></path>`,
  },
];

const RECENT: DockApp[] = [
  {
    name: "Word",
    open: true,
    art: svg`${plate("#ffffff")}<rect x="17" y="10" width="36" height="43" rx="3" fill="#41a5ee"></rect><rect x="17" y="21" width="36" height="11" fill="#2b7cd3"></rect>
      <rect x="17" y="32" width="36" height="10" fill="#185abd"></rect><path d="M17 42h36v8q0 3-3 3H20q-3 0-3-3z" fill="#103f91"></path>
      <rect x="6" y="20" width="24" height="24" rx="2.500" fill="#1a53b5"></rect>
      <text x="18" y="37.500" text-anchor="middle" font-size="15.500" font-weight="700" fill="#fff">W</text>`,
  },
  {
    name: "Calculator",
    open: true,
    art: svg`${plate("#d2d1cf")}<rect x="15" y="8" width="34" height="48" rx="6" fill="#2c2d2f"></rect><rect x="19" y="13" width="26" height="11" rx="2" fill="#5a5c5e"></rect>
      ${[0, 1, 2].map((r) => [0, 1, 2].map((c) => svg`<circle cx=${22.5 + c * 9.3} cy=${30.5 + r * 9.3} r="3.500" fill=${c === 2 ? "#ff9500" : "#cfcfcf"}></circle>`))}`,
  },
  {
    name: "Activity Monitor",
    open: true,
    art: svg`${plate("#c7d5dc")}<rect x="2.500" y="2.500" width="59" height="59" rx="13" fill="#050606"></rect><rect x="6.500" y="6.500" width="51" height="51" rx="8" fill="#17302c"></rect>
      <path d="M7 17h50M7 27h50M7 37h50M7 47h50M17 7v50M27 7v50M37 7v50M47 7v50" stroke="#244840" stroke-width=".7"></path>
      <path d="M7 36h5l2 3 3-29 4 34 2-8h5c4-1 4-7 7-7s4 7 7 7 3-4 5-4 3 3 7 3" fill="none" stroke="#56c9ad" stroke-width="1.200"></path>`,
  },
];

@customElement("app-dock")
export class AppDock extends LitElement {
  static styles = css`
    :host {
      display: flex;
      align-items: flex-start;
      gap: 20.97px;
      box-sizing: border-box;
      width: 2808px;
      height: 102px;
      margin: 4px 0 0 64px;
      padding: 15px 0 0 15px;
      border: 1.500px solid rgba(255, 255, 255, 0.28);
      border-radius: 30px;
      background: radial-gradient(ellipse 130px 110px at 190px 20px, rgba(160, 100, 120, 0.6), transparent),
        radial-gradient(ellipse 110px 100px at 210px 110px, rgba(135, 90, 150, 0.6), transparent),
        radial-gradient(ellipse 140px 150px at 680px 60px, rgba(160, 104, 112, 0.7), transparent),
        linear-gradient(90deg, #5c585c 0, #595659 820px, #66597a 900px, #685e7c 960px, #a673a0 1140px, #b476a6 1260px, #bd7aa4 1400px, #c87d96 1640px, #d58087 1900px, #d77f7e 2150px, #d5806f 2340px, #b97478 2540px, #94688a 2700px, #8e6680 2808px);
    }
    .slot {
      position: relative;
      width: 64px;
      height: 84px;
      flex: none;
    }
    .art {
      display: block;
      width: 64px;
      height: 64px;
      overflow: visible;
      filter: drop-shadow(0 1px 1px rgba(0, 0, 0, 0.3));
      font-family: Inter, "Liberation Sans", sans-serif;
    }
    .dot {
      position: absolute;
      left: 28px;
      top: 74px;
      width: 8px;
      height: 8px;
      border-radius: 4px;
      background: #1c0008;
    }
    .badge {
      position: absolute;
      top: -9px;
      right: -11px;
      min-width: 32px;
      height: 32px;
      box-sizing: border-box;
      padding: 0 2px;
      border-radius: 16px;
      background: #f53d33;
      color: #fff;
      font-size: 18.5px;
      line-height: 32px;
      text-align: center;
      letter-spacing: -0.2px;
      box-shadow: 0 1px 3px rgba(0, 0, 0, 0.25);
    }
    .sep {
      width: 2px;
      height: 73px;
      margin: -2px 7px 0 8.500px;
      background: rgba(50, 0, 20, 0.42);
      flex: none;
    }
    .trash {
      display: block;
      width: 62px;
      height: 76px;
      margin-top: -7px;
      flex: none;
    }
  `;
  private slotFor(a: DockApp): TemplateResult {
    return html`<div class="slot" title=${a.name}>
      <svg class="art" viewBox="0 0 64 64">${a.art}</svg>
      ${a.badge ? html`<span class="badge">${a.badge}</span>` : nothing} ${a.open ? html`<i class="dot"></i>` : nothing}
    </div>`;
  }
  render() {
    return html`${APPS.map((a) => this.slotFor(a))}
      <i class="sep"></i>
      ${RECENT.map((a) => this.slotFor(a))}
      <i class="sep"></i>
      <svg class="trash" viewBox="0 0 64 78">
        <defs>
          <linearGradient id="tr" x1="0" x2="1" y1="0" y2="0">
            <stop offset="0" stop-color="#cfcaca"></stop><stop offset=".3" stop-color="#f3f1f1"></stop>
            <stop offset=".75" stop-color="#e4e1e2"></stop><stop offset="1" stop-color="#c4bfc2"></stop>
          </linearGradient>
        </defs>
        <path d="M5 12l8-8 5 3 5-5 8 4 7-4 7 5 8-2 6 8-6 14H12z" fill="#e9e7e8"></path>
        <path d="M4 12c3 9 53 9 56 0l-7 58q-1 6-7 6.500H18q-6-.5-7-6.500z" fill="url(#tr)" opacity=".93"></path>
        <path d="M7 12c4 7 46 7 50 0-3-3-8-5-12-5l-5-3-6 4-7-4-6 4c-5 0-11 1-14 4z" fill="#a9a5a6"></path>
        <path d="M12 12l6 4 5-9 4 10 7-8 5 8 6-9 4 6 4-2" fill="none" stroke="#f6f5f5" stroke-width="3"></path>
        <path d="M16 10l4 6M31 7l2 9M42 14l5-5" stroke="#5f5a5b" stroke-width="2"></path>
        <path d="M23 12l5 3-4 2zM37 12l4 4-5 1z" fill="#3c8cc8"></path><path d="M43 14l4-3v5z" fill="#c8603c"></path>
      </svg>`;
  }
}

/* ---------- desktop ---------- */
@customElement("app-root")
export class AppRoot extends LitElement {
  static styles = css`
    :host {
      display: block;
      position: relative;
      width: 2938px;
      height: 1664px;
      overflow: hidden;
      background: #000;
      font-family: Inter, "Liberation Sans", Arial, sans-serif;
      text-rendering: geometricPrecision;
      -webkit-font-smoothing: antialiased;
    }
    .wall {
      position: absolute;
      left: 0;
      top: 1520px;
      width: 2938px;
      height: 144px;
    }
    .screen {
      position: relative;
      display: flex;
      flex-direction: column;
    }
    .window {
      position: relative;
      display: flex;
      box-sizing: border-box;
      height: 1548px;
      overflow: hidden;
      border-top: 2px solid #e8deea;
      border-radius: 0 0 20px 20px;
      background: #1f2937;
    }
    .track {
      width: 14px;
      flex: none;
      background: #1f2937;
    }
    .thumb {
      height: 555px;
      border-radius: 0 0 7px 7px;
      background: #ec4899;
    }
    .shade {
      position: absolute;
      left: 459px;
      right: 14px;
      bottom: 0;
      height: 110px;
      background: linear-gradient(rgba(0, 0, 0, 0), rgba(0, 0, 0, 0.035) 50%, rgba(0, 0, 0, 0.12));
      -webkit-mask-image: linear-gradient(90deg, #000 calc(100% - 130px), transparent);
      mask-image: linear-gradient(90deg, #000 calc(100% - 130px), transparent);
    }
  `;
  render() {
    return html`
      <svg class="wall" viewBox="0 0 2938 144" preserveAspectRatio="none" aria-hidden="true">
        <defs>
          <linearGradient id="sky" x1="0" x2="1" y1="0" y2="0">
            <stop offset="0" stop-color="#000"></stop><stop offset=".2" stop-color="#050208"></stop>
            <stop offset=".3" stop-color="#3c2858"></stop><stop offset=".355" stop-color="#8c508c"></stop>
            <stop offset=".5" stop-color="#a85c7e"></stop><stop offset=".7" stop-color="#bb6560"></stop>
            <stop offset=".85" stop-color="#a55a5a"></stop><stop offset=".93" stop-color="#6d3f55"></stop><stop offset="1" stop-color="#5c3046"></stop>
          </linearGradient>
        </defs>
        <rect width="2938" height="144" fill="url(#sky)"></rect>
        <path d="M0 28h1040l500 2 1398 0V33H0z" fill="#120a12"></path>
        <path d="M1150 28h1560v5H1150z" fill="#43222e"></path>
        <path d="M0 60L60 28h24L0 100zM0 112l66-60v30L0 144z" fill="#25055e"></path>
        <path d="M0 52L44 28M4 138L60 30" stroke="#06010f" stroke-width="7"></path>
        <path d="M182 32l6-4h46v5zM260 32q12-6 22 0z" fill="#6e3a33"></path>
        <path d="M198 134h70l-8 10h-56zM690 134h118l-20 10h-84z" fill="#22045e"></path>
        <path d="M650 134h16l-18 10zM830 134h200l-12 10H850z" fill="#443068"></path>
        <path d="M1190 144l8-6 10 6zM1210 134h42v10h-38zM1262 144q22-20 46 0z" fill="#e2713a"></path>
        <path d="M1840 134h6l6 10h-8z" fill="#20006c"></path>
        <path d="M2190 144l14-8 16-2h180l-20 10zM2470 144l12-10h60l-8 10zM2560 144l4-10h70l24 10z" fill="#4c2c58"></path>
        <path d="M2390 144l12-10h62l-8 10zM2628 134h100l20 10h-104z" fill="#dd6f3c"></path>
        <path d="M2760 28h178v40q-40-8-66-24-50-12-112-12z" fill="#26112b"></path>
      </svg>
      <div class="screen">
        <div class="window">
          <side-nav></side-nav>
          <finance-page></finance-page>
          <div class="track"><div class="thumb"></div></div>
          <div class="shade"></div>
        </div>
        <app-dock></app-dock>
      </div>
    `;
  }
}
